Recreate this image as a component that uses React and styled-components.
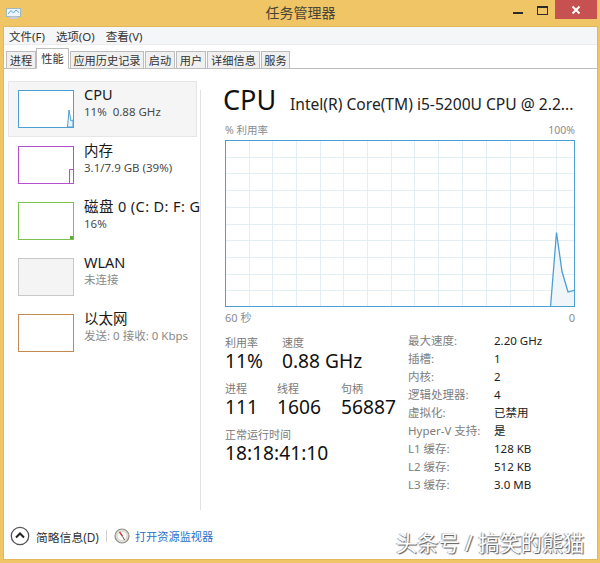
import React from 'react';
import styled, { createGlobalStyle } from 'styled-components';

const FONT = '"Noto Sans", "Noto Sans CJK SC", sans-serif';

const GlobalStyle = createGlobalStyle`
  html, body {
    margin: 0;
    padding: 0;
    background: #f0c566;
  }
  * {
    box-sizing: border-box;
  }
`;

const Window = styled.div`
  position: relative;
  width: 600px;
  height: 563px;
  padding: 0 3px 4px 4px;
  display: flex;
  flex-direction: column;
  background: #f0c566;
  font-family: ${FONT};
  color: #1a1a1a;
  overflow: hidden;
`;

const TitleBar = styled.div`
  position: relative;
  height: 27px;
  flex: none;
  display: flex;
  align-items: center;
  justify-content: center;
  padding-bottom: 3px;
  font-size: 14px;
  color: #4a4436;
`;

const AppIcon = styled.svg`
  position: absolute;
  left: 2px;
  top: 6px;
`;

const Controls = styled.div`
  position: absolute;
  right: 0;
  top: 0;
  display: flex;
  align-items: flex-start;
`;

const ControlButton = styled.div`
  width: ${(p) => p.$w}px;
  height: 19px;
  display: flex;
  align-items: center;
  justify-content: center;
  background: ${(p) => (p.$close ? '#c75050' : 'transparent')};
`;

const MinGlyph = styled.div`
  width: 10px;
  height: 2px;
  margin-top: 7px;
  background: #2b2b2b;
`;

const MaxGlyph = styled.div`
  width: 11px;
  height: 9px;
  border: 1px solid #2b2b2b;
  border-top-width: 2px;
  margin-top: 1px;
`;

const Client = styled.div`
  flex: 1;
  min-height: 0;
  display: flex;
  flex-direction: column;
  background: #fff;
  box-shadow: 0 0 0 1px #e3b85c;
`;

const MenuBar = styled.div`
  height: 18px;
  flex: none;
  display: flex;
  gap: 11px;
  padding-left: 5px;
  align-items: center;
  font-size: 11.5px;
  color: #333;
  background: #f5f6f7;
  border-bottom: 1px solid #ececec;
`;

const TabStrip = styled.div`
  height: 24px;
  flex: none;
  display: flex;
  align-items: flex-end;
  padding-left: 2px;
  gap: 1px;
  border-bottom: 1px solid #bdbdbd;
`;

const Tab = styled.div`
  height: ${(p) => (p.$active ? 21 : 18)}px;
  width: ${(p) => p.$w}px;
  margin-bottom: -1px;
  margin-left: ${(p) => (p.$active ? -1 : 0)}px;
  padding-bottom: 1px;
  display: flex;
  align-items: center;
  justify-content: center;
  font-size: 11.2px;
  white-space: nowrap;
  color: #333;
  border: 1px solid #bdbdbd;
  background: ${(p) => (p.$active ? '#fff' : '#f0f0f0')};
  border-bottom-color: ${(p) => (p.$active ? '#fff' : '#bdbdbd')};
`;

const Body = styled.div`
  flex: 1;
  min-height: 0;
  display: flex;
  flex-direction: column;
`;

const Panels = styled.div`
  flex: 1;
  min-height: 0;
  display: flex;
`;

const Sidebar = styled.div`
  width: 196px;
  flex: none;
  padding: 12px 0 0 4px;
  display: flex;
  flex-direction: column;
  overflow: hidden;
`;

const SideItem = styled.div`
  width: 189px;
  height: 56px;
  flex: none;
  display: flex;
  align-items: center;
  gap: 10px;
  padding-left: 9px;
  white-space: nowrap;
  background: ${(p) => (p.$selected ? '#f5f5f5' : 'transparent')};
  border: 1px solid ${(p) => (p.$selected ? '#e6e6e6' : 'transparent')};
`;

const Thumb = styled.div`
  position: relative;
  width: 56px;
  height: 38px;
  flex: none;
  overflow: hidden;
  border: 1px solid ${(p) => p.$color};
  background: ${(p) => p.$fill || '#fff'};
`;

const ThumbSpark = styled.svg`
  position: absolute;
  right: 0;
  bottom: 0;
`;

const SideText = styled.div`
  display: flex;
  flex-direction: column;
  margin-top: -13px;
`;

const SideName = styled.div`
  font-size: 14.5px;
  line-height: 18px;
  color: #1a1a1a;
  letter-spacing: ${(p) => p.$spread || 0}px;
`;

const SideValue = styled.div`
  font-size: 11.5px;
  line-height: 18px;
  color: ${(p) => (p.$muted ? '#8a8a8a' : '#4a4a4a')};
`;

const Divider = styled.div`
  width: 1px;
  flex: none;
  margin-top: 21px;
  background: #e2e2e2;
`;

const Main = styled.div`
  flex: 1;
  min-width: 0;
  padding: 14px 0 0 24px;
  display: flex;
  flex-direction: column;
`;

const Heading = styled.div`
  display: flex;
  align-items: baseline;
  height: 34px;
  margin-left: -2px;
`;

const HeadingTitle = styled.div`
  font-size: 27px;
  line-height: 34px;
  width: 67px;
  color: #111;
`;

const HeadingModel = styled.div`
  font-size: 15.6px;
  white-space: nowrap;
  color: #222;
`;

const GraphCaption = styled.div`
  display: flex;
  justify-content: space-between;
  width: 350px;
  height: 14px;
  margin-top: 6px;
  font-size: 10.5px;
  line-height: 14px;
  color: #8c8c8c;
`;

const Graph = styled.svg`
  display: block;
  flex: none;
  margin-top: 3px;
`;

const GraphFoot = styled(GraphCaption)`
  margin-top: 3px;
  height: 16px;
  line-height: 16px;
  font-size: 11px;
`;

const Details = styled.div`
  display: flex;
  margin-top: 9px;
`;

const Stats = styled.div`
  width: 183px;
  flex: none;
  display: flex;
  flex-direction: column;
  gap: 9px;
`;

const StatRow = styled.div`
  display: flex;
`;

const Stat = styled.div`
  width: ${(p) => (p.$w ? `${p.$w}px` : 'auto')};
  flex: none;
  white-space: nowrap;
`;

const StatLabel = styled.div`
  font-size: 11px;
  line-height: 15px;
  color: #7a7a7a;
`;

const StatValue = styled.div`
  font-size: 19.2px;
  line-height: 22px;
  color: #111;
`;

const Specs = styled.div`
  display: grid;
  grid-template-columns: 86px auto;
  grid-auto-rows: 18px;
  align-items: center;
  margin-top: -4px;
  font-size: 11.5px;
  white-space: nowrap;
`;

const SpecKey = styled.div`
  color: #7e7e7e;
`;

const SpecVal = styled.div`
  color: #222;
`;

const Footer = styled.div`
  height: 49px;
  flex: none;
  display: flex;
  align-items: center;
  padding: 3px 0 0 6px;
`;

const FooterLabel = styled.div`
  margin-left: 6px;
  font-size: 11.8px;
  color: #333;
`;

const FooterSep = styled.div`
  width: 1px;
  height: 12px;
  margin: 0 7px 0 7px;
  background: #d0d0d0;
`;

const MonitorLink = styled.div`
  margin-left: 5px;
  font-size: 11.2px;
  color: #2a6fc9;
`;

const Watermark = styled.div`
  position: absolute;
  left: 396px;
  top: 529px;
  font-size: 21.2px;
  line-height: 28px;
  white-space: nowrap;
  color: #fff;
  text-shadow: 1px 1px 1px #555, -1px 0 1px #999;
`;

const TABS = [
  ['进程', 30],
  ['性能', 33],
  ['应用历史记录', 74],
  ['启动', 30],
  ['用户', 30],
  ['详细信息', 53],
  ['服务', 29],
];

const SIDE_ITEMS = [
  { name: 'CPU', value: '11%\u00a0\u00a00.88 GHz', color: '#4c9fd4', selected: true, spark: 'cpu' },
  { name: '内存', value: '3.1/7.9 GB (39%)', color: '#b44fd0', spark: 'mem' },
  { name: '磁盘 0 (C: D: F: G', value: '16%', color: '#7cc04f', spark: 'disk', spread: 0.4 },
  { name: 'WLAN', value: '未连接', color: '#c8c8c8', fill: '#f4f4f4', muted: true },
  { name: '以太网', value: '发送: 0 接收: 0 Kbps', color: '#c18a50', muted: true },
];

const SPECS = [
  ['最大速度:', '2.20 GHz'],
  ['插槽:', '1'],
  ['内核:', '2'],
  ['逻辑处理器:', '4'],
  ['虚拟化:', '已禁用'],
  ['Hyper-V 支持:', '是'],
  ['L1 缓存:', '128 KB'],
  ['L2 缓存:', '512 KB'],
  ['L3 缓存:', '3.0 MB'],
];

const Spark = ({ kind }) => {
  if (kind === 'cpu') {
    return (
      <ThumbSpark width="6" height="18" viewBox="0 0 6 18">
        <path d="M0.5 18 L2 1 L4 12 L6 11 V18 Z" fill="#eaf3fa" stroke="#4c9fd4" strokeWidth="1" />
      </ThumbSpark>
    );
  }
  if (kind === 'mem') {
    return (
      <ThumbSpark width="4" height="14" viewBox="0 0 4 14">
        <path d="M0.5 14 V0.5 H4" fill="#f7eefb" stroke="#b44fd0" strokeWidth="1" />
      </ThumbSpark>
    );
  }
  if (kind === 'disk') {
    return (
      <ThumbSpark width="3" height="3" viewBox="0 0 3 3">
        <rect width="3" height="3" fill="#5ea83a" />
      </ThumbSpark>
    );
  }
  return null;
};

const CpuGraph = () => {
  const w = 350;
  const h = 167;
  const cols = [24, 47, 71, 95, 118, 142, 166, 189, 213, 237, 261, 285, 308, 331];
  const rows = Array.from({ length: 9 }, (_, i) => Math.round((i + 1) * 16.7) + 0.5);
  return (
    <Graph width={w} height={h} viewBox={`0 0 ${w} ${h}`}>
      <rect width={w} height={h} fill="#fff" />
      {cols.map((x) => (
        <line key={x} x1={x + 0.5} x2={x + 0.5} y1="0" y2={h} stroke="#e2eff7" strokeWidth="1" />
      ))}
      {rows.map((y) => (
        <line key={y} x1="0" x2={w} y1={y} y2={y} stroke="#e2eff7" strokeWidth="1" />
      ))}
      <path d="M325.5 167 L331.5 92.5 L337 131.5 L343 152 L350 150 V167 Z" fill="#f0f5fa" />
      <path d="M325.5 167 L331.5 92.5 L337 131.5 L343 152 L350 150" fill="none" stroke="#4c9fd4" strokeWidth="1.3" />
      <rect x="0.5" y="0.5" width={w - 1} height={h - 1} fill="none" stroke="#4c9fd4" strokeWidth="1" />
    </Graph>
  );
};

const App = () => (
  <Window>
    <GlobalStyle />
    <TitleBar>
      <AppIcon width="16" height="14" viewBox="0 0 16 14">
        <rect x="0.5" y="2.5" width="14" height="8" fill="#eef6fb" stroke="#9fb7c6" />
        <path d="M2 8 L5 4.5 L7.5 7 L10 4 L13 6.5" fill="none" stroke="#5aa6d6" strokeWidth="1" />
        <path d="M3 13 H12 L10.5 10.5 H4.5 Z" fill="#c4ced4" />
      </AppIcon>
      任务管理器
      <Controls>
        <ControlButton $w={25}>
          <MinGlyph />
        </ControlButton>
        <ControlButton $w={25}>
          <MaxGlyph />
        </ControlButton>
        <ControlButton $w={42} $close>
          <svg width="10" height="10" viewBox="0 0 10 10">
            <path d="M1.5 1.5 L8.5 8.5 M8.5 1.5 L1.5 8.5" stroke="#fff" strokeWidth="2" />
          </svg>
        </ControlButton>
      </Controls>
    </TitleBar>
    <Client>
      <MenuBar>
        <span>文件(F)</span>
        <span>选项(O)</span>
        <span>查看(V)</span>
      </MenuBar>
      <TabStrip>
        {TABS.map(([label, w]) => (
          <Tab key={label} $w={w} $active={label === '性能'}>
            {label}
          </Tab>
        ))}
      </TabStrip>
      <Body>
        <Panels>
          <Sidebar>
            {SIDE_ITEMS.map((item) => (
              <SideItem key={item.name} $selected={item.selected}>
                <Thumb $color={item.color} $fill={item.fill}>
                  <Spark kind={item.spark} />
                </Thumb>
                <SideText>
                  <SideName $spread={item.spread}>{item.name}</SideName>
                  <SideValue $muted={item.muted}>{item.value}</SideValue>
                </SideText>
              </SideItem>
            ))}
          </Sidebar>
          <Divider />
          <Main>
            <Heading>
              <HeadingTitle>CPU</HeadingTitle>
              <HeadingModel>Intel(R) Core(TM) i5-5200U CPU @ 2.2...</HeadingModel>
            </Heading>
            <GraphCaption>
              <span>% 利用率</span>
              <span>100%</span>
            </GraphCaption>
            <CpuGraph />
            <GraphFoot>
              <span>60 秒</span>
              <span>0</span>
            </GraphFoot>
            <Details>
              <Stats>
                <StatRow>
                  <Stat $w={57}>
                    <StatLabel>利用率</StatLabel>
                    <StatValue>11%</StatValue>
                  </Stat>
                  <Stat>
                    <StatLabel>速度</StatLabel>
                    <StatValue>0.88 GHz</StatValue>
                  </Stat>
                </StatRow>
                <StatRow>
                  <Stat $w={52}>
                    <StatLabel>进程</StatLabel>
                    <StatValue>111</StatValue>
                  </Stat>
                  <Stat $w={64}>
                    <StatLabel>线程</StatLabel>
                    <StatValue>1606</StatValue>
                  </Stat>
                  <Stat>
                    <StatLabel>句柄</StatLabel>
                    <StatValue>56887</StatValue>
                  </Stat>
                </StatRow>
                <Stat>
                  <StatLabel>正常运行时间</StatLabel>
                  <StatValue>18:18:41:10</StatValue>
                </Stat>
              </Stats>
              <Specs>
                {SPECS.map(([k, v]) => (
                  <React.Fragment key={k}>
                    <SpecKey>{k}</SpecKey>
                    <SpecVal>{v}</SpecVal>
                  </React.Fragment>
                ))}
              </Specs>
            </Details>
          </Main>
        </Panels>
        <Footer>
          <svg width="20" height="20" viewBox="0 0 20 20">
            <circle cx="10" cy="10" r="8.7" fill="#fff" stroke="#555" strokeWidth="1.3" />
            <path d="M6 11.5 L10 7.5 L14 11.5" fill="none" stroke="#222" strokeWidth="2" />
          </svg>
          <FooterLabel>简略信息(D)</FooterLabel>
          <FooterSep />
          <svg width="16" height="16" viewBox="0 0 16 16">
            <circle cx="8" cy="8" r="7" fill="#e4e0d8" stroke="#8f8f86" strokeWidth="1.2" />
            <circle cx="8" cy="8" r="4.8" fill="#fff" stroke="#c9c4ba" strokeWidth="0.6" />
            <path d="M5.5 4 L8.6 8.4" stroke="#c43c2e" strokeWidth="1.4" />
            <path d="M8.6 8.4 L10.5 12" stroke="#555" strokeWidth="1" />
          </svg>
          <MonitorLink>打开资源监视器</MonitorLink>
        </Footer>
      </Body>
    </Client>
    <Watermark>头条号 / 搞笑的熊猫</Watermark>
  </Window>
);

export default App;
